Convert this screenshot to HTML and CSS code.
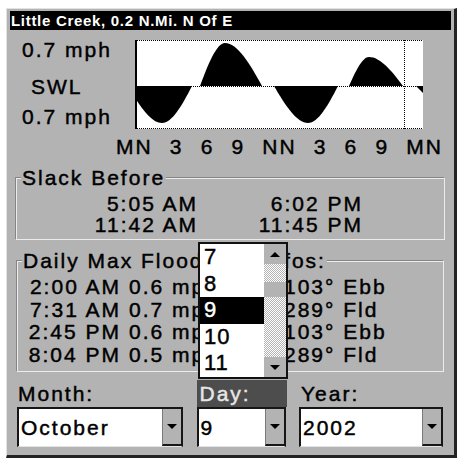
FILE: index.html
```html
<!DOCTYPE html>
<html>
<head>
<meta charset="utf-8">
<title>Tidal Current</title>
<link rel="stylesheet" href="styles.css">
</head>
<body>
<div class="window">
  <div class="titlebar">Little Creek, 0.2 N.Mi. N Of E</div>

  <div class="chart-row">
    <div class="yaxis">
      <div class="ylabel">0.7 mph</div>
      <div class="ylabel ylabel-mid">SWL</div>
      <div class="ylabel ylabel-low">0.7 mph</div>
    </div>
    <svg class="chart" width="289" height="89" viewBox="0 0 289 89">
      <rect x="0" y="0" width="288" height="89" fill="#fff"/>
      <g stroke="#000" stroke-width="1" stroke-dasharray="1 1" fill="none">
        <line x1="0" y1="0.5" x2="288" y2="0.5"/>
        <line x1="0" y1="88.5" x2="288" y2="88.5"/>
        <line x1="0" y1="46.5" x2="288" y2="46.5"/>
        <line x1="269.5" y1="0" x2="269.5" y2="89"/>
      </g>
      <rect x="0" y="0" width="2" height="89" fill="#000"/>
      <g fill="#000">
        <path d="M-7,46 C4.3,65.4 15.7,83 27,83 C37,83 47,65.4 57,46 Z"/>
        <path d="M65,46 C73.3,23.5 81.7,3 90,3 C102.3,3 114.7,23.5 127,46 Z"/>
        <path d="M139,46 C150.3,65.4 161.7,83 173,83 C183,83 193,65.4 203,46 Z"/>
        <path d="M214,46 C220.7,30.8 227.3,17 234,17 C245.3,17 256.7,30.8 268,46 Z"/>
        <path d="M281,46 L288,53 L288,46 Z"/>
      </g>
    </svg>
  </div>

  <div class="xaxis">
    <span>MN</span><span>3</span><span>6</span><span>9</span><span>NN</span><span>3</span><span>6</span><span>9</span><span>MN</span>
  </div>

  <fieldset class="group group-slack">
    <legend>Slack Before</legend>
    <div class="slack-grid">
      <span>5:05 AM</span><span>6:02 PM</span>
      <span>11:42 AM</span><span>11:45 PM</span>
    </div>
  </fieldset>

  <fieldset class="group group-daily">
    <legend>Daily Max Flood/Ebb Infos:</legend>
    <div class="daily-grid">
      <span class="t">2:00 AM</span><span>0.6 mph</span><span>103° Ebb</span>
      <span class="t">7:31 AM</span><span>0.7 mph</span><span>289° Fld</span>
      <span class="t">2:45 PM</span><span>0.6 mph</span><span>103° Ebb</span>
      <span class="t">8:04 PM</span><span>0.5 mph</span><span>289° Fld</span>
    </div>
  </fieldset>

  <div class="controls">
    <div class="ctl-label">Month:</div>
    <div class="ctl-label ctl-label-active">Day:</div>
    <div class="ctl-label ctl-label-year">Year:</div>
    <div class="combo"><span class="combo-value">October</span><span class="combo-btn"><i class="tri-down"></i></span></div>
    <div class="combo"><span class="combo-value">9</span><span class="combo-btn"><i class="tri-down"></i></span></div>
    <div class="combo"><span class="combo-value">2002</span><span class="combo-btn"><i class="tri-down"></i></span></div>
  </div>

  <div class="listbox">
    <div class="list-items">
      <div class="list-item">7</div>
      <div class="list-item">8</div>
      <div class="list-item list-item-selected">9</div>
      <div class="list-item">10</div>
      <div class="list-item">11</div>
    </div>
    <div class="scrollbar">
      <div class="scroll-btn"><i class="tri-up"></i></div>
      <div class="scroll-track scroll-track-top"></div>
      <div class="scroll-thumb"></div>
      <div class="scroll-track scroll-track-bottom"></div>
      <div class="scroll-btn"><i class="tri-down"></i></div>
    </div>
  </div>
</div>
</body>
</html>
```

FILE: styles.css
```css
html, body {
  margin: 0;
  padding: 0;
  background: #ffffff;
}

body {
  font-family: "Liberation Sans", Arial, sans-serif;
  font-size: 21px;
  letter-spacing: 2px;
  color: #000;
  -webkit-text-stroke: 0.45px currentColor;
}

.window {
  position: relative;
  margin: 8px 0 0 6px;
  width: 451px;
  height: 450px;
  box-sizing: border-box;
  border-top: 1px solid #e2e2e2;
  border-left: 1px solid #e2e2e2;
  border-right: 3px solid #222;
  border-bottom: 3px solid #222;
  padding: 2px 3px 0;
  background: #b3b3b3;
}

.titlebar {
  height: 19px;
  line-height: 19px;
  background: #000;
  color: #fff;
  font-size: 15px;
  font-weight: bold;
  letter-spacing: 0.7px;
  padding-left: 1px;
  white-space: nowrap;
  overflow: hidden;
  -webkit-text-stroke: 0;
}

.chart-row {
  display: flex;
  padding-left: 12px;
}

.yaxis {
  width: 113px;
  padding-top: 9px;
}

.ylabel {
  line-height: 22px;
  white-space: nowrap;
}

.ylabel-mid {
  margin-top: 15px;
  padding-left: 9px;
}

.ylabel-low {
  margin-top: 8px;
}

.chart {
  display: block;
  margin-top: 10px;
}

.xaxis {
  display: flex;
  justify-content: space-between;
  margin: 7px 0 0 106px;
  width: 327px;
  line-height: 22px;
}

.group {
  margin: 9px 6px 0;
  padding: 4px 0 4px;
  border: 1px solid #ececec;
  box-shadow: -1px -1px 0 #858585;
  min-width: 0;
}

.group legend {
  margin-left: 4px;
  padding: 0 1px;
  line-height: 22px;
  background: #b3b3b3;
  white-space: nowrap;
}

.group-daily {
  margin: 10px 7px 0;
  padding-bottom: 5px;
}

.slack-grid {
  display: grid;
  grid-template-columns: 181px 165px;
  line-height: 21px;
  text-align: right;
}

.daily-grid {
  display: grid;
  grid-template-columns: 103px 147px auto;
  column-gap: 8px;
  line-height: 22.5px;
  white-space: nowrap;
}

.daily-grid .t {
  text-align: right;
}

.controls {
  display: grid;
  grid-template-columns: 166px 89px 144px;
  grid-template-rows: 27px 40px;
  column-gap: 13.5px;
  margin: 8px 0 0 7px;
}

.ctl-label {
  line-height: 27px;
  padding-left: 1px;
}

.ctl-label-active {
  background: #4d4d4d;
  color: #e6e6e6;
  padding-left: 3px;
  margin-right: -1px;
}

.ctl-label-year {
  padding-left: 2px;
}

.combo {
  display: flex;
  box-sizing: border-box;
  height: 40px;
  background: #fff;
  border-top: 2px solid #161616;
  border-left: 2px solid #161616;
  border-right: 2px solid #161616;
  border-bottom: 1px solid #e4e4e4;
}

.combo-value {
  flex: 1;
  padding-left: 2px;
  line-height: 37px;
}

.combo-btn {
  width: 19px;
  box-sizing: border-box;
  background: #b3b3b3;
  border-left: 1px solid #7a7a7a;
  border-bottom: 2px solid #161616;
  display: flex;
  align-items: center;
  justify-content: center;
}

.tri-down {
  display: block;
  width: 0;
  height: 0;
  border-left: 5px solid transparent;
  border-right: 5px solid transparent;
  border-top: 5px solid #000;
}

.tri-up {
  display: block;
  width: 0;
  height: 0;
  border-left: 5px solid transparent;
  border-right: 5px solid transparent;
  border-bottom: 5px solid #000;
}

.listbox {
  position: absolute;
  left: 191px;
  top: 233px;
  width: 90px;
  height: 137px;
  box-sizing: border-box;
  border: 2px solid #111;
  background: #fff;
  display: flex;
}

.list-items {
  flex: 1;
}

.list-item {
  height: 26.6px;
  line-height: 25px;
  padding-left: 4px;
  font-size: 22px;
  letter-spacing: 1px;
}

.list-item-selected {
  background: #000;
  color: #fff;
}

.scrollbar {
  width: 22px;
  display: flex;
  flex-direction: column;
}

.scroll-btn {
  height: 20px;
  flex: none;
  background: #b3b3b3;
  display: flex;
  align-items: center;
  justify-content: center;
}

.scroll-track {
  background: repeating-conic-gradient(#ffffff 0 25%, #b3b3b3 0 50%) 0 0 / 2px 2px;
}

.scroll-track-top {
  height: 18px;
}

.scroll-thumb {
  height: 15px;
  background: #b3b3b3;
}

.scroll-track-bottom {
  flex: 1;
}
```
